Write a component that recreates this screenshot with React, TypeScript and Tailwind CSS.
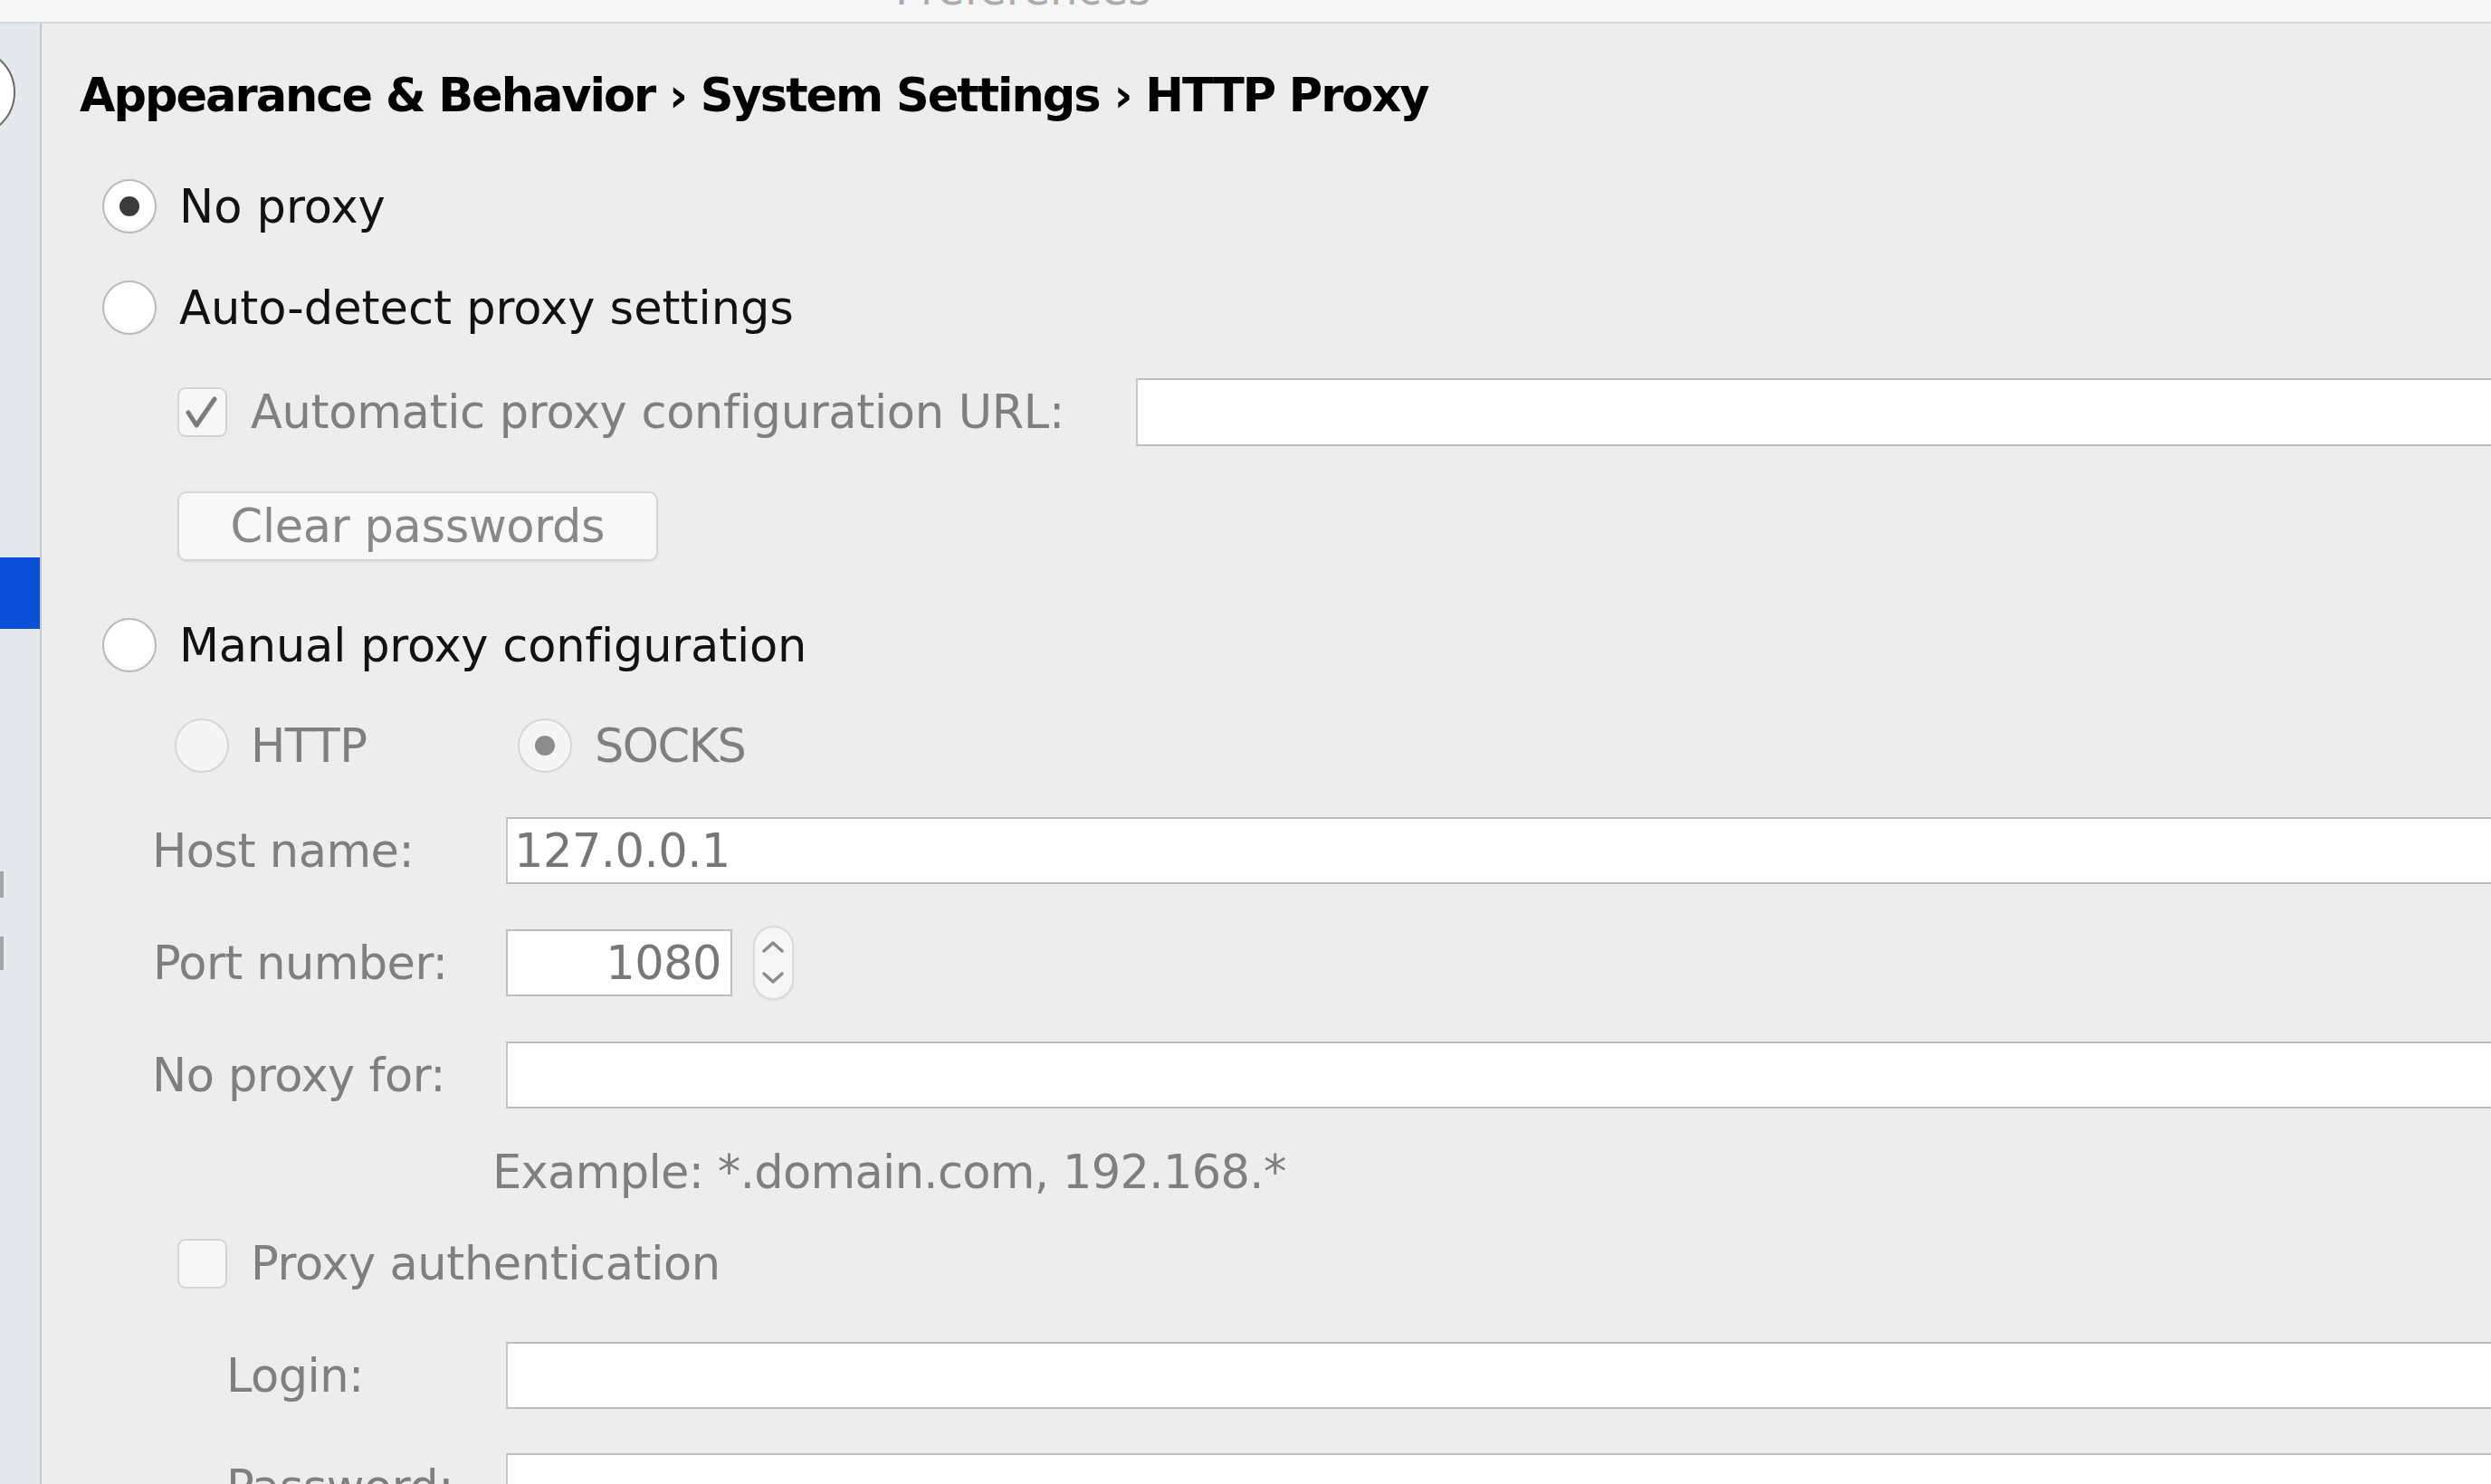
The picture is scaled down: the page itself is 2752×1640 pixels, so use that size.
import React from "react";

const FONT = "font-['DejaVu_Sans','Liberation_Sans',sans-serif]";

function Radio({ checked = false, disabled = false }: { checked?: boolean; disabled?: boolean }) {
  return (
    <div
      className={
        disabled
          ? "flex h-[60px] w-[60px] shrink-0 items-center justify-center rounded-full border-2 border-[#d6d6d6] bg-[#f5f5f5]"
          : "flex h-[60px] w-[60px] shrink-0 items-center justify-center rounded-full border-2 border-[#b9b9b9] bg-white shadow-[inset_0_-3px_4px_rgba(0,0,0,0.04)]"
      }
    >
      {checked && (
        <div
          className={
            disabled ? "h-[22px] w-[22px] rounded-full bg-[#8d8d8d]" : "h-[22px] w-[22px] rounded-full bg-[#3b3b3b]"
          }
        />
      )}
    </div>
  );
}

function Checkbox({ checked = false }: { checked?: boolean }) {
  return (
    <div className="flex h-[55px] w-[55px] shrink-0 items-center justify-center rounded-[9px] border-2 border-[#d4d4d4] bg-[#f7f7f7]">
      {checked && (
        <svg width="55" height="55" viewBox="0 0 55 55" className="shrink-0">
          <polyline
            points="12,28 21,42 41,13"
            fill="none"
            stroke="#7c7c7c"
            strokeWidth="5"
            strokeLinecap="round"
            strokeLinejoin="round"
          />
        </svg>
      )}
    </div>
  );
}

function Spinner() {
  return (
    <div className="ml-[23px] h-[82px] w-[45px] shrink-0 rounded-full border-2 border-[#dadada] bg-[#f6f6f6] shadow-[0_1px_2px_rgba(0,0,0,0.08)]">
      <svg width="41" height="78" viewBox="0 0 41 78">
        <polyline points="10,26 20,17 30,26" fill="none" stroke="#8a8a8a" strokeWidth="3.5" strokeLinecap="round" strokeLinejoin="round" />
        <polyline points="10,51 20,60 30,51" fill="none" stroke="#8a8a8a" strokeWidth="3.5" strokeLinecap="round" strokeLinejoin="round" />
      </svg>
    </div>
  );
}

function FieldRow({
  label,
  labelPad = "pl-[122px]",
  value,
  mt,
}: {
  label: string;
  labelPad?: string;
  value?: string;
  mt: string;
}) {
  return (
    <div className={`${mt} flex h-[74px] shrink-0 items-center`}>
      <div className={`w-[513px] shrink-0 ${labelPad} tracking-[-0.5px] text-[#7f7f7f]`}>{label}</div>
      <div className="flex h-[74px] flex-1 items-center border-2 border-r-0 border-[#bcbcbc] border-l-[#c8c8c8] bg-white pl-[7px] tracking-[-0.5px] text-[#777777]">
        {value}
      </div>
    </div>
  );
}

export default function App() {
  return (
    <div className={`${FONT} flex h-[1640px] w-[2752px] flex-col overflow-hidden bg-[#ededed] text-[51px] leading-none`}>
      {/* title bar */}
      <div className="h-[26px] shrink-0 overflow-hidden border-b-2 border-[#d7d7d7] bg-[#f6f6f6] pl-[989px]">
        <div className="-mt-[36px] text-[48px] leading-[48px] text-[#ababab]">Preferences</div>
      </div>

      <div className="flex min-h-0 flex-1">
        {/* sidebar */}
        <div className="flex w-[46px] shrink-0 flex-col overflow-hidden border-r-2 border-[#c6c6c6] bg-[#e5e8ec]">
          <div className="-ml-[81px] mt-[27px] h-[98px] w-[98px] shrink-0 rounded-full border-2 border-[#6a6a6a] bg-white" />
          <div className="mt-[465px] h-[79px] w-full shrink-0 bg-[#0b4fd7]" />
          <div className="mt-[268px] h-[29px] w-[4px] shrink-0 bg-[#a6a6a6]" />
          <div className="mt-[43px] h-[37px] w-[4px] shrink-0 bg-[#a6a6a6]" />
        </div>

        {/* main */}
        <div className="flex min-w-0 flex-1 flex-col overflow-hidden">
          <div className="mt-[49px] flex h-[60px] shrink-0 items-center whitespace-pre pl-[42px] font-bold tracking-[-2px] text-black">
            Appearance &amp; Behavior › System Settings › HTTP Proxy
          </div>

          <div className="mt-[62px] flex h-[62px] shrink-0 items-center pl-[67px]">
            <Radio checked />
            <span className="ml-[25px] text-[#111111]">No proxy</span>
          </div>

          <div className="mt-[49px] flex h-[64px] shrink-0 items-center pl-[67px]">
            <Radio />
            <span className="ml-[25px] text-[#111111]">Auto-detect proxy settings</span>
          </div>

          <div className="mt-[46px] flex h-[75px] shrink-0 items-center">
            <div className="flex w-[1209px] shrink-0 items-center pl-[150px]">
              <Checkbox checked />
              <span className="ml-[26px] tracking-[-0.3px] text-[#7f7f7f]">Automatic proxy configuration URL:</span>
            </div>
            <div className="h-[75px] flex-1 border-2 border-r-0 border-[#bcbcbc] border-l-[#c8c8c8] bg-white" />
          </div>

          <div className="mt-[50px] ml-[150px] flex h-[77px] w-[531px] shrink-0 items-center justify-center rounded-[10px] border-2 border-[#d6d6d6] bg-[#f8f8f8] tracking-[-0.3px] text-[#888888] shadow-[0_1px_2px_rgba(0,0,0,0.08)]">
            Clear passwords
          </div>

          <div className="mt-[62px] flex h-[62px] shrink-0 items-center pl-[67px]">
            <Radio />
            <span className="ml-[25px] tracking-[-0.2px] text-[#111111]">Manual proxy configuration</span>
          </div>

          <div className="mt-[49px] flex h-[62px] shrink-0 items-center pl-[147px]">
            <div className="flex w-[379px] shrink-0 items-center">
              <Radio disabled />
              <span className="ml-[24px] tracking-[-0.5px] text-[#7f7f7f]">HTTP</span>
            </div>
            <Radio disabled checked />
            <span className="ml-[25px] tracking-[-1.5px] text-[#7f7f7f]">SOCKS</span>
          </div>

          <FieldRow mt="mt-[48px]" label="Host name:" value="127.0.0.1" />

          <div className="mt-[46px] flex h-[82px] shrink-0 items-center">
            <div className="w-[513px] shrink-0 pl-[123px] tracking-[-0.6px] text-[#7f7f7f]">Port number:</div>
            <div className="flex h-[74px] w-[250px] shrink-0 items-center justify-end border-2 border-[#bcbcbc] bg-white pr-[10px] tracking-[-0.5px] text-[#777777]">
              1080
            </div>
            <Spinner />
          </div>

          <FieldRow mt="mt-[46px]" label="No proxy for:" />

          <div className="mt-[40px] flex h-[60px] shrink-0 items-center pl-[498px] tracking-[-0.65px] text-[#7f7f7f]">
            Example: *.domain.com, 192.168.*
          </div>

          <div className="mt-[43px] flex h-[56px] shrink-0 items-center pl-[150px]">
            <Checkbox />
            <span className="ml-[26px] tracking-[-0.4px] text-[#7f7f7f]">Proxy authentication</span>
          </div>

          <FieldRow mt="mt-[59px]" label="Login:" labelPad="pl-[204px]" />
          <FieldRow mt="mt-[49px]" label="Password:" labelPad="pl-[204px]" />
        </div>
      </div>
    </div>
  );
}
